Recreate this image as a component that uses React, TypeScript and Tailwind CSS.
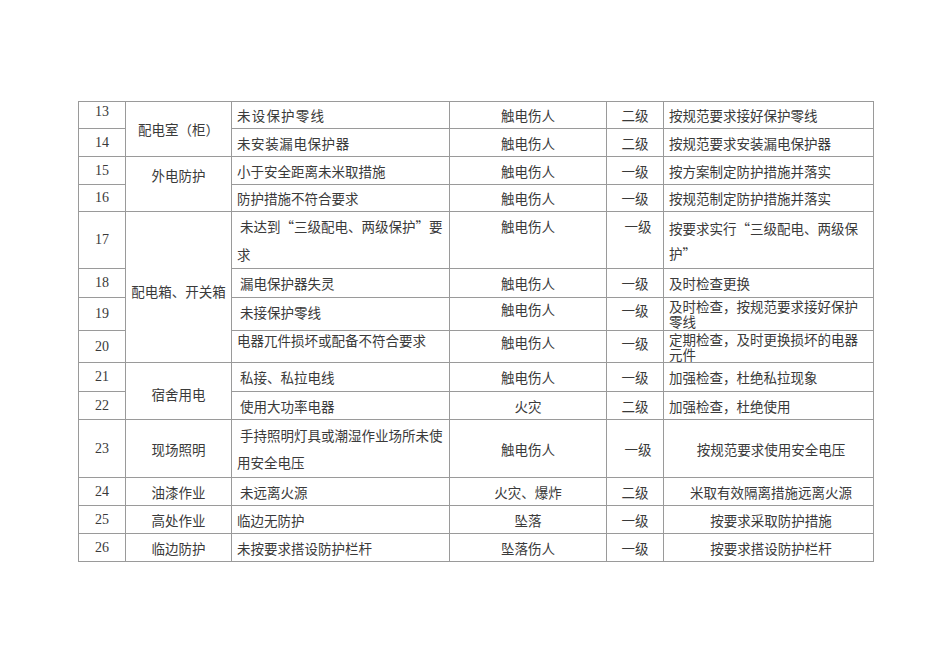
import React from "react"

type Cell = {
  text: string[]
  cls?: string
}

type Row = {
  no: string
  noCls?: string
  h: string
  group?: { text: string; span: number; cls?: string }
  hazard: Cell
  harm: Cell
  level: Cell
  measure: Cell
}

const ROWS: Row[] = [
  {
    no: "13",
    noCls: "pb-[6px]",
    h: "h-[27px]",
    group: { text: "配电室（柜）", span: 2 },
    hazard: { text: ["未设保护零线"], cls: "tracking-[1.2px]" },
    harm: { text: ["触电伤人"] },
    level: { text: ["二级"] },
    measure: { text: ["按规范要求接好保护零线"] },
  },
  {
    no: "14",
    h: "h-[28px]",
    hazard: { text: ["未安装漏电保护器"], cls: "tracking-[0.6px]" },
    harm: { text: ["触电伤人"] },
    level: { text: ["二级"] },
    measure: { text: ["按规范要求安装漏电保护器"] },
  },
  {
    no: "15",
    h: "h-[28px]",
    group: { text: "外电防护", span: 2, cls: "pb-[18px]" },
    hazard: { text: ["小于安全距离未米取措施"] },
    harm: { text: ["触电伤人"] },
    level: { text: ["一级"] },
    measure: { text: ["按方案制定防护措施并落实"] },
  },
  {
    no: "16",
    h: "h-[27px]",
    hazard: { text: ["防护措施不符合要求"] },
    harm: { text: ["触电伤人"] },
    level: { text: ["一级"] },
    measure: { text: ["按规范制定防护措施并落实"] },
  },
  {
    no: "17",
    h: "h-[56px]",
    group: { text: "配电箱、开关箱", span: 4, cls: "pt-[7px]" },
    hazard: {
      text: ["\u00a0未达到“三级配电、两级保护”要", "求"],
      cls: "align-top leading-[28px]",
    },
    harm: { text: ["触电伤人"], cls: "align-top pt-[4px]" },
    level: { text: ["一级"], cls: "align-top pt-[4px] pl-[6px]" },
    measure: {
      text: ["按要求实行“三级配电、两级保", "护”"],
      cls: "align-top pt-[4px] leading-[25px]",
    },
  },
  {
    no: "18",
    h: "h-[29px]",
    hazard: { text: ["\u00a0漏电保护器失灵"] },
    harm: { text: ["触电伤人"] },
    level: { text: ["一级"] },
    measure: { text: ["及时检查更换"] },
  },
  {
    no: "19",
    h: "h-[33px]",
    hazard: { text: ["\u00a0未接保护零线"], cls: "pb-[5px]" },
    harm: { text: ["触电伤人"], cls: "pb-[10px]" },
    level: { text: ["一级"], cls: "pb-[8px]" },
    measure: {
      text: ["及时检查，按规范要求接好保护", "零线"],
      cls: "align-top pt-[1px] leading-[15px]",
    },
  },
  {
    no: "20",
    h: "h-[32px]",
    hazard: { text: ["电器兀件损坏或配备不符合要求"], cls: "align-top leading-[19px]" },
    harm: { text: ["触电伤人"], cls: "pb-[10px]" },
    level: { text: ["一级"], cls: "pb-[7px]" },
    measure: {
      text: ["定期检查，及时更换损坏的电器", "元件"],
      cls: "align-top pt-[1px] leading-[15px]",
    },
  },
  {
    no: "21",
    h: "h-[29px]",
    group: { text: "宿舍用电", span: 2, cls: "pt-[5px]" },
    hazard: { text: ["\u00a0私接、私拉电线"] },
    harm: { text: ["触电伤人"] },
    level: { text: ["一级"] },
    measure: { text: ["加强检查，杜绝私拉现象"] },
  },
  {
    no: "22",
    h: "h-[28px]",
    hazard: { text: ["\u00a0使用大功率电器"] },
    harm: { text: ["火灾"] },
    level: { text: ["二级"] },
    measure: { text: ["加强检查，杜绝使用"] },
  },
  {
    no: "23",
    h: "h-[58px]",
    group: { text: "现场照明", span: 1 },
    hazard: {
      text: ["\u00a0手持照明灯具或潮湿作业场所未使", "用安全电压"],
      cls: "leading-[27px]",
    },
    harm: { text: ["触电伤人"] },
    level: { text: ["一级"], cls: "pl-[6px]" },
    measure: { text: ["按规范要求使用安全电压"], cls: "text-center" },
  },
  {
    no: "24",
    h: "h-[28px]",
    group: { text: "油漆作业", span: 1 },
    hazard: { text: ["\u00a0未远离火源"] },
    harm: { text: ["火灾、爆炸"] },
    level: { text: ["二级"] },
    measure: { text: ["米取有效隔离措施远离火源"], cls: "text-center" },
  },
  {
    no: "25",
    h: "h-[28px]",
    group: { text: "高处作业", span: 1 },
    hazard: { text: ["临边无防护"] },
    harm: { text: ["坠落"] },
    level: { text: ["一级"] },
    measure: { text: ["按要求采取防护措施"], cls: "text-center" },
  },
  {
    no: "26",
    h: "h-[28px]",
    group: { text: "临边防护", span: 1 },
    hazard: { text: ["未按要求搭设防护栏杆"] },
    harm: { text: ["坠落伤人"] },
    level: { text: ["一级"] },
    measure: { text: ["按要求搭设防护栏杆"], cls: "text-center" },
  },
]

function Lines({ text }: { text: string[] }) {
  return (
    <>
      {text.map((line, i) => (
        <React.Fragment key={i}>
          {i > 0 && <br />}
          {line}
        </React.Fragment>
      ))}
    </>
  )
}

const td = "border border-[#9a9a9a] p-0 align-middle"

export default function App() {
  return (
    <div className="min-h-[672px] w-[950px] bg-white pl-[78px] pt-[101px] text-[#3a3a3a]">
      <table
        className="table-fixed border-collapse w-[795px] text-[13.5px] leading-[20px]"
        style={{ fontFamily: '"Noto Sans CJK SC", sans-serif' }}
      >
        <colgroup>
          <col className="w-[47px]" />
          <col className="w-[106px]" />
          <col className="w-[218px]" />
          <col className="w-[157px]" />
          <col className="w-[57px]" />
          <col className="w-[210px]" />
        </colgroup>
        <tbody>
          {ROWS.map((row) => (
            <tr key={row.no} className={row.h}>
              <td
                className={`${td} text-center text-[14px] font-['Liberation_Serif',serif] ${row.noCls ?? ""}`}
              >
                {row.no}
              </td>
              {row.group && (
                <td
                  rowSpan={row.group.span}
                  className={`${td} text-center ${row.group.cls ?? ""}`}
                >
                  {row.group.text}
                </td>
              )}
              <td className={`${td} pl-[5px] whitespace-nowrap ${row.hazard.cls ?? ""}`}>
                <Lines text={row.hazard.text} />
              </td>
              <td className={`${td} text-center ${row.harm.cls ?? ""}`}>
                <Lines text={row.harm.text} />
              </td>
              <td className={`${td} text-center ${row.level.cls ?? ""}`}>
                <Lines text={row.level.text} />
              </td>
              <td className={`${td} pl-[5px] whitespace-nowrap ${row.measure.cls ?? ""}`}>
                <Lines text={row.measure.text} />
              </td>
            </tr>
          ))}
        </tbody>
      </table>
    </div>
  )
}
